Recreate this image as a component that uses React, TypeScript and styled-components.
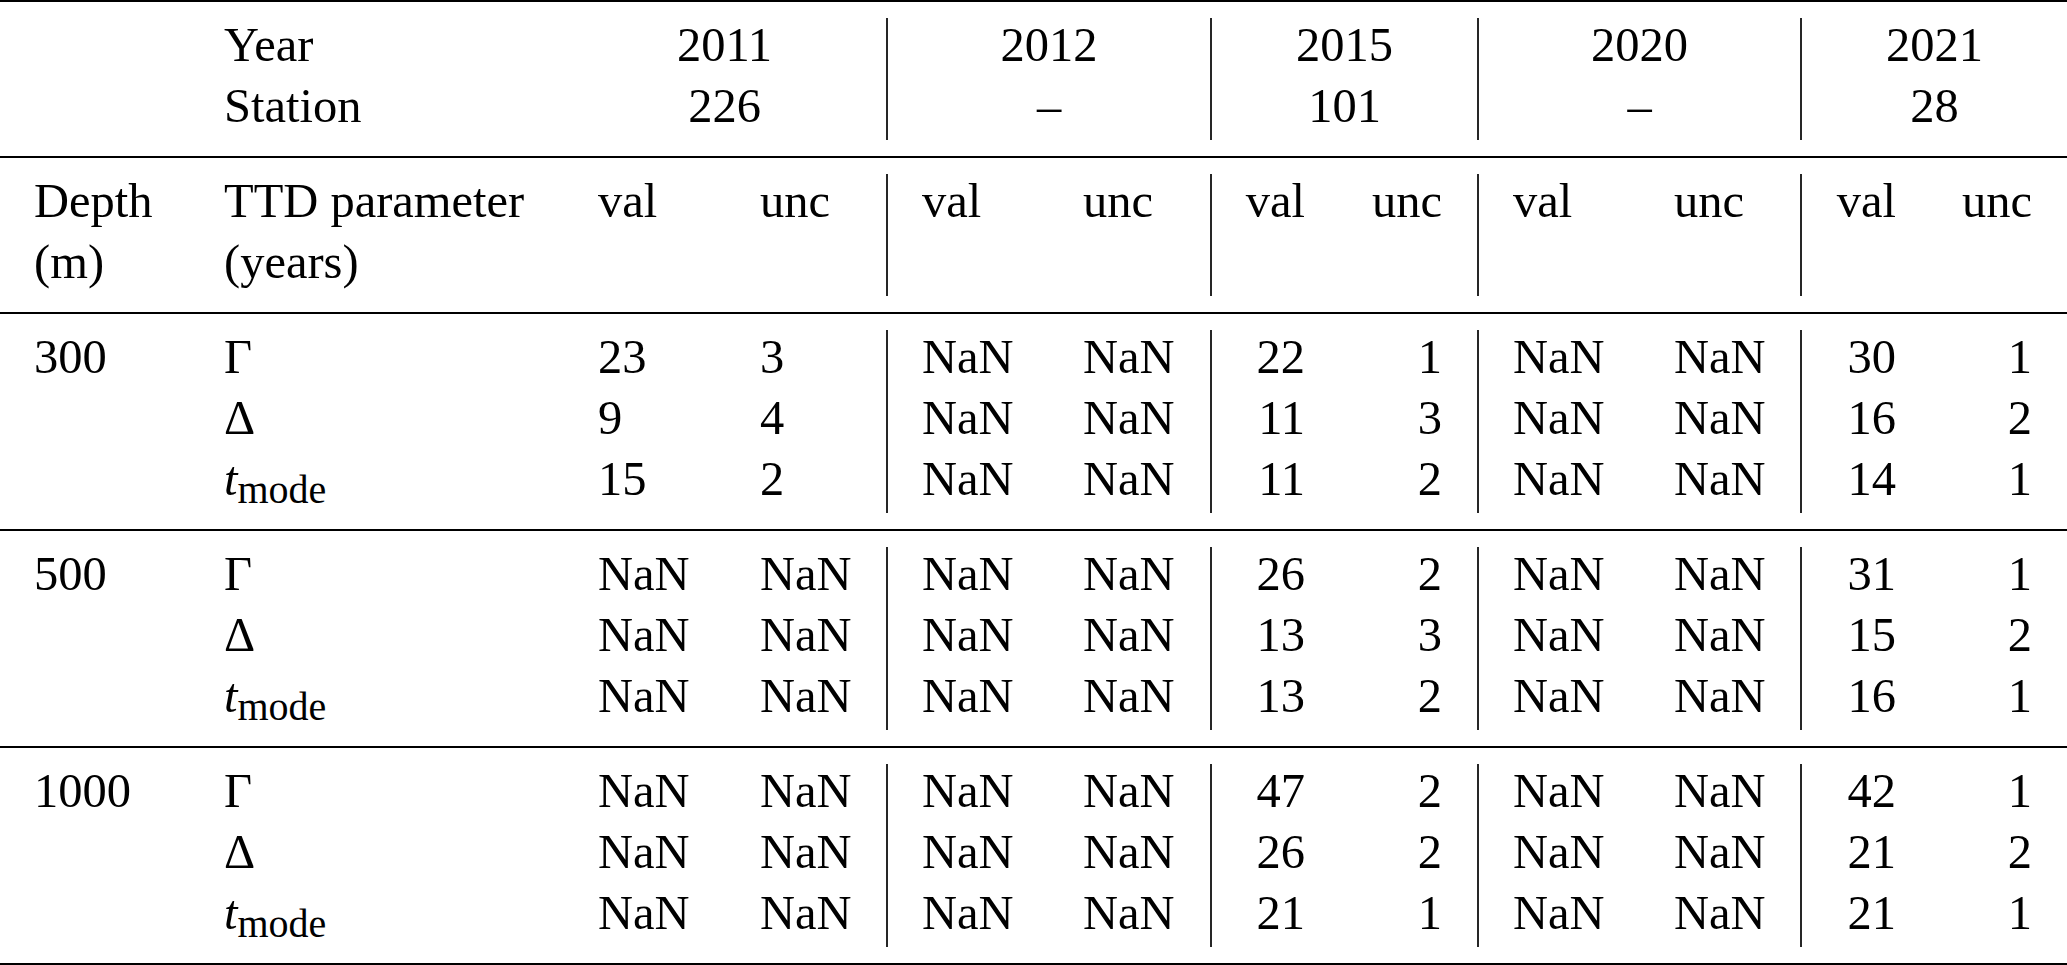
import React from "react";
import styled, { createGlobalStyle } from "styled-components";

const Global = createGlobalStyle`
  html, body {
    margin: 0;
    padding: 0;
    background: #ffffff;
  }
  body {
    font-family: "Liberation Serif", "Times New Roman", serif;
    color: #000000;
  }
`;

type Align = "left" | "right" | "center";

const COLS = "189px 374px 162px 161px 162px 162px 130px 137px 162px 161px 131px 136px";

const Table = styled.div`
  width: 2067px;
  display: flex;
  flex-direction: column;
  font-family: "Liberation Serif", "Times New Roman", serif;
  font-size: 48.5px;
  color: #000;
`;

const Rule = styled.div`
  height: 2px;
  background: #000;
`;

const Section = styled.div`
  display: grid;
  grid-template-columns: ${COLS};
  grid-auto-rows: 61px;
  padding: 16px 0;
`;

const Cell = styled.div<{
  $align?: Align;
  $rule?: boolean;
  $span?: number;
  $rows?: number;
  $first?: boolean;
}>`
  display: flex;
  flex-direction: column;
  gap: 8px;
  align-items: ${(p) =>
    p.$align === "right" ? "flex-end" : p.$align === "center" ? "center" : "flex-start"};
  line-height: 53px;
  padding-bottom: 8px;
  padding-left: ${(p) =>
    p.$align === "left" || !p.$align ? (p.$first ? "34px" : p.$rule ? "34px" : "35px") : "0"};
  padding-right: ${(p) => (p.$align === "right" ? "35px" : "0")};
  border-left: ${(p) => (p.$rule ? "2px solid #262626" : "none")};
  grid-column: ${(p) => (p.$span ? `span ${p.$span}` : "auto")};
  grid-row: ${(p) => (p.$rows ? `span ${p.$rows}` : "auto")};
  white-space: nowrap;
`;

const Italic = styled.span`
  font-style: italic;
`;

const Sub = styled.span`
  font-size: 40px;
  line-height: 0;
  vertical-align: -8px;
`;

const ALIGNS: Align[] = [
  "left",
  "left",
  "left",
  "left",
  "left",
  "left",
  "right",
  "right",
  "left",
  "left",
  "right",
  "right",
];
const RULES = [false, false, false, false, true, false, true, false, true, false, true, false];

const years = [
  { year: "2011", station: "226" },
  { year: "2012", station: "–" },
  { year: "2015", station: "101" },
  { year: "2020", station: "–" },
  { year: "2021", station: "28" },
];

type Row = { param: React.ReactNode; values: string[] };
type Block = { depth: string; rows: Row[] };

const TMode = () => (
  <span>
    <Italic>t</Italic>
    <Sub>mode</Sub>
  </span>
);

const blocks: Block[] = [
  {
    depth: "300",
    rows: [
      { param: "Γ", values: ["23", "3", "NaN", "NaN", "22", "1", "NaN", "NaN", "30", "1"] },
      { param: "Δ", values: ["9", "4", "NaN", "NaN", "11", "3", "NaN", "NaN", "16", "2"] },
      { param: <TMode />, values: ["15", "2", "NaN", "NaN", "11", "2", "NaN", "NaN", "14", "1"] },
    ],
  },
  {
    depth: "500",
    rows: [
      { param: "Γ", values: ["NaN", "NaN", "NaN", "NaN", "26", "2", "NaN", "NaN", "31", "1"] },
      { param: "Δ", values: ["NaN", "NaN", "NaN", "NaN", "13", "3", "NaN", "NaN", "15", "2"] },
      { param: <TMode />, values: ["NaN", "NaN", "NaN", "NaN", "13", "2", "NaN", "NaN", "16", "1"] },
    ],
  },
  {
    depth: "1000",
    rows: [
      { param: "Γ", values: ["NaN", "NaN", "NaN", "NaN", "47", "2", "NaN", "NaN", "42", "1"] },
      { param: "Δ", values: ["NaN", "NaN", "NaN", "NaN", "26", "2", "NaN", "NaN", "21", "2"] },
      { param: <TMode />, values: ["NaN", "NaN", "NaN", "NaN", "21", "1", "NaN", "NaN", "21", "1"] },
    ],
  },
];

function HeaderTop() {
  return (
    <Section>
      <Cell $first $rows={2} />
      <Cell $rows={2}>
        <span>Year</span>
        <span>Station</span>
      </Cell>
      {years.map((y, i) => (
        <Cell key={y.year} $align="center" $span={2} $rows={2} $rule={i > 0}>
          <span>{y.year}</span>
          <span>{y.station}</span>
        </Cell>
      ))}
    </Section>
  );
}

function HeaderSub() {
  return (
    <Section>
      <Cell $first $rows={2}>
        <span>Depth</span>
        <span>(m)</span>
      </Cell>
      <Cell $rows={2}>
        <span>TTD parameter</span>
        <span>(years)</span>
      </Cell>
      {ALIGNS.slice(2).map((a, i) => (
        <Cell key={i} $align={a} $rule={RULES[i + 2]} $rows={2}>
          <span>{i % 2 === 0 ? "val" : "unc"}</span>
        </Cell>
      ))}
    </Section>
  );
}

function DataBlock({ block }: { block: Block }) {
  return (
    <Section>
      {block.rows.map((row, r) => (
        <React.Fragment key={r}>
          <Cell $first>{r === 0 ? <span>{block.depth}</span> : null}</Cell>
          <Cell>
            <span>{row.param}</span>
          </Cell>
          {row.values.map((v, i) => (
            <Cell key={i} $align={ALIGNS[i + 2]} $rule={RULES[i + 2]}>
              <span>{v}</span>
            </Cell>
          ))}
        </React.Fragment>
      ))}
    </Section>
  );
}

export default function App() {
  return (
    <>
      <Global />
      <Table>
        <Rule />
        <HeaderTop />
        <Rule />
        <HeaderSub />
        <Rule />
        {blocks.map((b) => (
          <React.Fragment key={b.depth}>
            <DataBlock block={b} />
            <Rule />
          </React.Fragment>
        ))}
      </Table>
    </>
  );
}
